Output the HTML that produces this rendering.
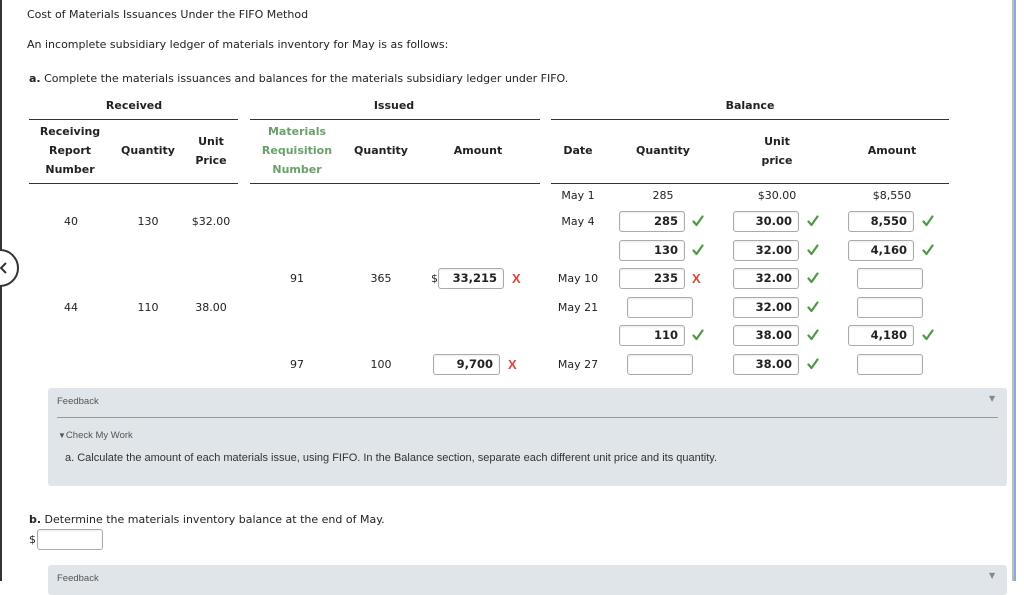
<!DOCTYPE html>
<html><head><meta charset="utf-8"><style>
*{margin:0;padding:0;box-sizing:border-box}
body{width:1024px;height:581px;overflow:hidden;background:#fff;position:relative;font-family:"DejaVu Sans","Liberation Sans",sans-serif;font-size:11px;color:#222}
#w{position:absolute;left:0;top:1px;width:1024px;height:581px}
.a{position:absolute;white-space:nowrap}
.c{position:absolute;transform:translateX(-50%);text-align:center;white-space:nowrap}
.b{font-weight:bold;font-size:11px;line-height:19px}
.g{color:#6aa06a}
.ln{position:absolute;height:1px;background:#333}
.in{position:absolute;height:21px;border:1px solid #aaa;border-radius:3px;background:#fff;font-weight:bold;font-size:11.5px;text-align:right;padding-right:6px;line-height:19px;box-shadow:inset 0 1px 2px rgba(0,0,0,.08)}
.ck{position:absolute;width:12px;height:12px}
.x{position:absolute;color:#e0413a;font-size:13px;font-weight:bold;font-family:"Liberation Sans",sans-serif}
.fb{position:absolute;left:48px;width:959px;background:#dfe5e8;border-radius:3px}
.ar{font-family:"Liberation Sans",sans-serif}
</style></head><body>
<svg width="0" height="0" style="position:absolute"><defs><symbol id="k" viewBox="0 0 12 12"><path d="M1.5 6.5 L4.5 10 L10.5 1.5" fill="none" stroke="#4e9a46" stroke-width="2.2" stroke-linecap="round" stroke-linejoin="round"/></symbol></defs></svg>
<div style="position:absolute;left:0;top:0;width:2px;height:581px;background:#333"></div>
<div style="position:absolute;left:-19px;top:249px;width:38px;height:38px;border:2px solid #333;border-radius:50%;background:#fff"></div>
<svg style="position:absolute;left:0;top:262px" width="8" height="12"><path d="M6 1 L1 6 L6 11" fill="none" stroke="#333" stroke-width="2"/></svg>
<div style="position:absolute;left:1012px;top:0;width:2px;height:581px;background:#bbb"></div>
<div style="position:absolute;left:1014px;top:0;width:2px;height:581px;background:#8aa8e8"></div>
<div id="w">
<div class="a" style="left:27px;top:7px">Cost of Materials Issuances Under the FIFO Method</div>
<div class="a" style="left:27px;top:37px">An incomplete subsidiary ledger of materials inventory for May is as follows:</div>
<div class="a" style="left:29px;top:71px"><b>a.</b> Complete the materials issuances and balances for the materials subsidiary ledger under FIFO.</div>

<div class="c b" style="left:134px;top:95px">Received</div>
<div class="c b" style="left:394px;top:95px">Issued</div>
<div class="c b" style="left:750px;top:95px">Balance</div>
<div class="ln" style="left:29px;top:118px;width:209px"></div>
<div class="ln" style="left:250px;top:118px;width:290px"></div>
<div class="ln" style="left:551px;top:118px;width:398px"></div>
<div class="ln" style="left:29px;top:182px;width:209px"></div>
<div class="ln" style="left:250px;top:182px;width:290px"></div>
<div class="ln" style="left:551px;top:182px;width:398px"></div>

<div class="c b" style="left:70px;top:121px">Receiving<br>Report<br>Number</div>
<div class="c b" style="left:148px;top:140px">Quantity</div>
<div class="c b" style="left:211px;top:131px">Unit<br>Price</div>
<div class="c b g" style="left:297px;top:121px">Materials<br>Requisition<br>Number</div>
<div class="c b" style="left:381px;top:140px">Quantity</div>
<div class="c b" style="left:478px;top:140px">Amount</div>
<div class="c b" style="left:578px;top:140px">Date</div>
<div class="c b" style="left:663px;top:140px">Quantity</div>
<div class="c b" style="left:777px;top:131px">Unit<br>price</div>
<div class="c b" style="left:892px;top:140px">Amount</div>

<div class="c" style="left:578px;top:188px">May 1</div>
<div class="c" style="left:663px;top:188px">285</div>
<div class="c" style="left:777px;top:188px">$30.00</div>
<div class="c" style="left:892px;top:188px">$8,550</div>

<div class="c" style="left:71px;top:214px">40</div>
<div class="c" style="left:148px;top:214px">130</div>
<div class="c" style="left:211px;top:214px">$32.00</div>
<div class="c" style="left:578px;top:214px">May 4</div>
<div class="in" style="left:619px;top:210px;width:66px">285</div><svg class="ck" style="left:692px;top:214px"><use href="#k"/></svg>
<div class="in" style="left:733px;top:210px;width:66px">30.00</div><svg class="ck" style="left:807px;top:214px"><use href="#k"/></svg>
<div class="in" style="left:848px;top:210px;width:66px">8,550</div><svg class="ck" style="left:922px;top:214px"><use href="#k"/></svg>

<div class="in" style="left:619px;top:239px;width:66px">130</div><svg class="ck" style="left:692px;top:243px"><use href="#k"/></svg>
<div class="in" style="left:733px;top:239px;width:66px">32.00</div><svg class="ck" style="left:807px;top:243px"><use href="#k"/></svg>
<div class="in" style="left:848px;top:239px;width:66px">4,160</div><svg class="ck" style="left:922px;top:243px"><use href="#k"/></svg>

<div class="c" style="left:297px;top:271px">91</div>
<div class="c" style="left:381px;top:271px">365</div>
<div class="a" style="left:431px;top:271px">$</div>
<div class="in" style="left:438px;top:267px;width:66px">33,215</div><div class="x" style="left:512px;top:270px">X</div>
<div class="c" style="left:578px;top:271px">May 10</div>
<div class="in" style="left:619px;top:267px;width:66px">235</div><div class="x" style="left:692px;top:270px">X</div>
<div class="in" style="left:733px;top:267px;width:66px">32.00</div><svg class="ck" style="left:807px;top:271px"><use href="#k"/></svg>
<div class="in" style="left:857px;top:267px;width:66px"></div>

<div class="c" style="left:71px;top:300px">44</div>
<div class="c" style="left:148px;top:300px">110</div>
<div class="c" style="left:211px;top:300px">38.00</div>
<div class="c" style="left:578px;top:300px">May 21</div>
<div class="in" style="left:627px;top:296px;width:66px"></div>
<div class="in" style="left:733px;top:296px;width:66px">32.00</div><svg class="ck" style="left:807px;top:300px"><use href="#k"/></svg>
<div class="in" style="left:857px;top:296px;width:66px"></div>

<div class="in" style="left:619px;top:324px;width:66px">110</div><svg class="ck" style="left:692px;top:328px"><use href="#k"/></svg>
<div class="in" style="left:733px;top:324px;width:66px">38.00</div><svg class="ck" style="left:807px;top:328px"><use href="#k"/></svg>
<div class="in" style="left:848px;top:324px;width:66px">4,180</div><svg class="ck" style="left:922px;top:328px"><use href="#k"/></svg>

<div class="c" style="left:297px;top:357px">97</div>
<div class="c" style="left:381px;top:357px">100</div>
<div class="in" style="left:433px;top:353px;width:67px">9,700</div><div class="x" style="left:508px;top:356px">X</div>
<div class="c" style="left:578px;top:357px">May 27</div>
<div class="in" style="left:627px;top:353px;width:66px"></div>
<div class="in" style="left:733px;top:353px;width:66px">38.00</div><svg class="ck" style="left:807px;top:357px"><use href="#k"/></svg>
<div class="in" style="left:857px;top:353px;width:66px"></div>

<div class="fb" style="top:387px;height:98px"></div>
<div class="a ar" style="left:57px;top:395px;font-size:9.5px;color:#555">Feedback</div>
<div class="a" style="left:989px;top:393px;font-size:8px;color:#888">▼</div>
<div style="position:absolute;left:57px;top:416px;width:941px;height:1px;background:#999"></div>
<div class="a ar" style="left:58px;top:429px;font-size:9.5px;color:#555"><span style="font-size:8px">▼</span>Check My Work</div>
<div class="a ar" style="left:65px;top:451px;font-size:11px;color:#333">a. Calculate the amount of each materials issue, using FIFO. In the Balance section, separate each different unit price and its quantity.</div>

<div class="a" style="left:29px;top:512px"><b>b.</b> Determine the materials inventory balance at the end of May.</div>
<div class="a" style="left:29px;top:532px">$</div>
<div class="in" style="left:37px;top:528px;width:66px"></div>

<div class="fb" style="top:564px;height:30px"></div>
<div class="a ar" style="left:57px;top:572px;font-size:9.5px;color:#555">Feedback</div>
<div class="a" style="left:989px;top:570px;font-size:8px;color:#888">▼</div>
</div>
</body></html>
